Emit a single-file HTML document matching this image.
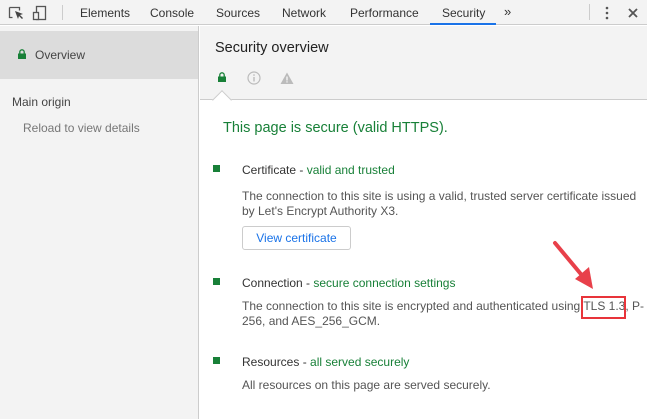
<!DOCTYPE html>
<html><head><style>
*{margin:0;padding:0;box-sizing:border-box}
body{width:647px;height:419px;overflow:hidden;background:#fff;font-family:"Liberation Sans",sans-serif;font-size:12px;color:#333;position:relative}
.a{position:absolute;white-space:nowrap}
.g{color:#188038}
.d{color:#555;font-size:12px}
.sq{position:absolute;width:7px;height:7px;background:#188038}
</style></head><body>
<div class="a" style="left:0;top:0;width:647px;height:25px;background:#f3f3f3;border-bottom:1px solid #ccc"></div>
<svg class="a" style="left:8px;top:4px" width="50" height="18" viewBox="0 0 50 18">
<path d="M1.5 3.5h10v3M1.5 3.5v10h3" fill="none" stroke="#555" stroke-width="1.3"/>
<path d="M7 7l8 3-3 1 3 3-1 1-3-3-1 3z" fill="#444"/>
<rect x="28.5" y="2.5" width="9" height="13" fill="none" stroke="#555" stroke-width="1.3"/>
<rect x="25.5" y="8.5" width="5" height="7" fill="#f3f3f3" stroke="#555" stroke-width="1.3"/>
</svg>
<div class="a" style="left:62px;top:5px;width:1px;height:15px;background:#ccc"></div>
<div class="a" style="left:80px;top:6px;color:#333">Elements</div>
<div class="a" style="left:150px;top:6px">Console</div>
<div class="a" style="left:216px;top:6px">Sources</div>
<div class="a" style="left:282px;top:6px">Network</div>
<div class="a" style="left:350px;top:6px">Performance</div>
<div class="a" style="left:442px;top:6px">Security</div>
<div class="a" style="left:430px;top:23px;width:66px;height:2px;background:#1a73e8"></div>
<div class="a" style="left:504px;top:4px;font-size:13px">»</div>
<div class="a" style="left:589px;top:4px;width:1px;height:16px;background:#ccc"></div>
<svg class="a" style="left:604px;top:5px" width="40" height="16"><circle cx="3" cy="3" r="1.3" fill="#555"/><circle cx="3" cy="8" r="1.3" fill="#555"/><circle cx="3" cy="13" r="1.3" fill="#555"/><path d="M25 4l8 8M33 4l-8 8" stroke="#555" stroke-width="1.8"/></svg>

<div class="a" style="left:0;top:26px;width:199px;height:393px;background:#f3f3f3;border-right:1px solid #ccc"></div>
<div class="a" style="left:0;top:31px;width:198px;height:48px;background:#dcdcdc"></div>
<svg class="a" style="left:18px;top:49px" width="8" height="10"><path d="M1.8 4.5V3a2.2 2.2 0 0 1 4.4 0v1.5" fill="none" stroke="#188038" stroke-width="1.3"/><rect x="0" y="4.5" width="8" height="5.5" fill="#188038"/></svg>
<div class="a" style="left:35px;top:48px;color:#444">Overview</div>
<div class="a" style="left:12px;top:95px;color:#444">Main origin</div>
<div class="a" style="left:23px;top:121px;color:#777">Reload to view details</div>

<div class="a" style="left:200px;top:26px;width:447px;height:74px;background:#f3f3f3;border-bottom:1px solid #ccc"></div>
<div class="a" style="left:215px;top:93px;width:14px;height:14px;background:#fff;border-left:1px solid #ccc;border-top:1px solid #ccc;transform:rotate(45deg)"></div>
<div class="a" style="left:215px;top:40px;font-size:14.5px;color:#222">Security overview</div>
<svg class="a" style="left:218px;top:72px" width="8" height="10"><path d="M1.8 4.5V3a2.2 2.2 0 0 1 4.4 0v1.5" fill="none" stroke="#188038" stroke-width="1.3"/><rect x="0" y="4.5" width="8" height="5.5" fill="#188038"/></svg>
<svg class="a" style="left:247px;top:71px" width="50" height="14"><circle cx="7" cy="7" r="6" fill="none" stroke="#bbb" stroke-width="1.2"/><rect x="6.3" y="6" width="1.4" height="4.5" fill="#bbb"/><rect x="6.3" y="3.3" width="1.4" height="1.5" fill="#bbb"/><path d="M40 1.5l6.5 11.5h-13z" fill="#bbb"/><rect x="39.4" y="5.5" width="1.2" height="4" fill="#fff"/><rect x="39.4" y="10.3" width="1.2" height="1.2" fill="#fff"/></svg>

<div class="a g" style="left:223px;top:120px;font-size:14.5px">This page is secure (valid HTTPS).</div>
<div class="sq" style="left:213px;top:165px"></div>
<div class="a" style="left:242px;top:163px">Certificate - <span class="g">valid and trusted</span></div>
<div class="a d" style="left:242px;top:189px;line-height:15px">The connection to this site is using a valid, trusted server certificate issued<br>by Let's Encrypt Authority X3.</div>
<div class="a" style="left:242px;top:226px;width:109px;height:24px;border:1px solid #ccc;border-radius:3px;color:#1a73e8;text-align:center;line-height:22px;font-size:12px">View certificate</div>
<div class="sq" style="left:213px;top:278px"></div>
<div class="a" style="left:242px;top:276px">Connection - <span class="g">secure connection settings</span></div>
<div class="a d" style="left:242px;top:299px;line-height:15px">The connection to this site is encrypted and authenticated using TLS 1.3, P-<br>256, and AES_256_GCM.</div>
<div class="a" style="left:581px;top:296px;width:45px;height:23px;border:2px solid #e8343a"></div>
<svg class="a" style="left:545px;top:235px" width="60" height="60"><path d="M10 8L40 44" stroke="#e8404a" stroke-width="4" stroke-linecap="round"/><path d="M48 54L30 44L44 32z" fill="#e8404a"/></svg>
<div class="sq" style="left:213px;top:357px"></div>
<div class="a" style="left:242px;top:355px">Resources - <span class="g">all served securely</span></div>
<div class="a d" style="left:242px;top:378px">All resources on this page are served securely.</div>
</body></html>
